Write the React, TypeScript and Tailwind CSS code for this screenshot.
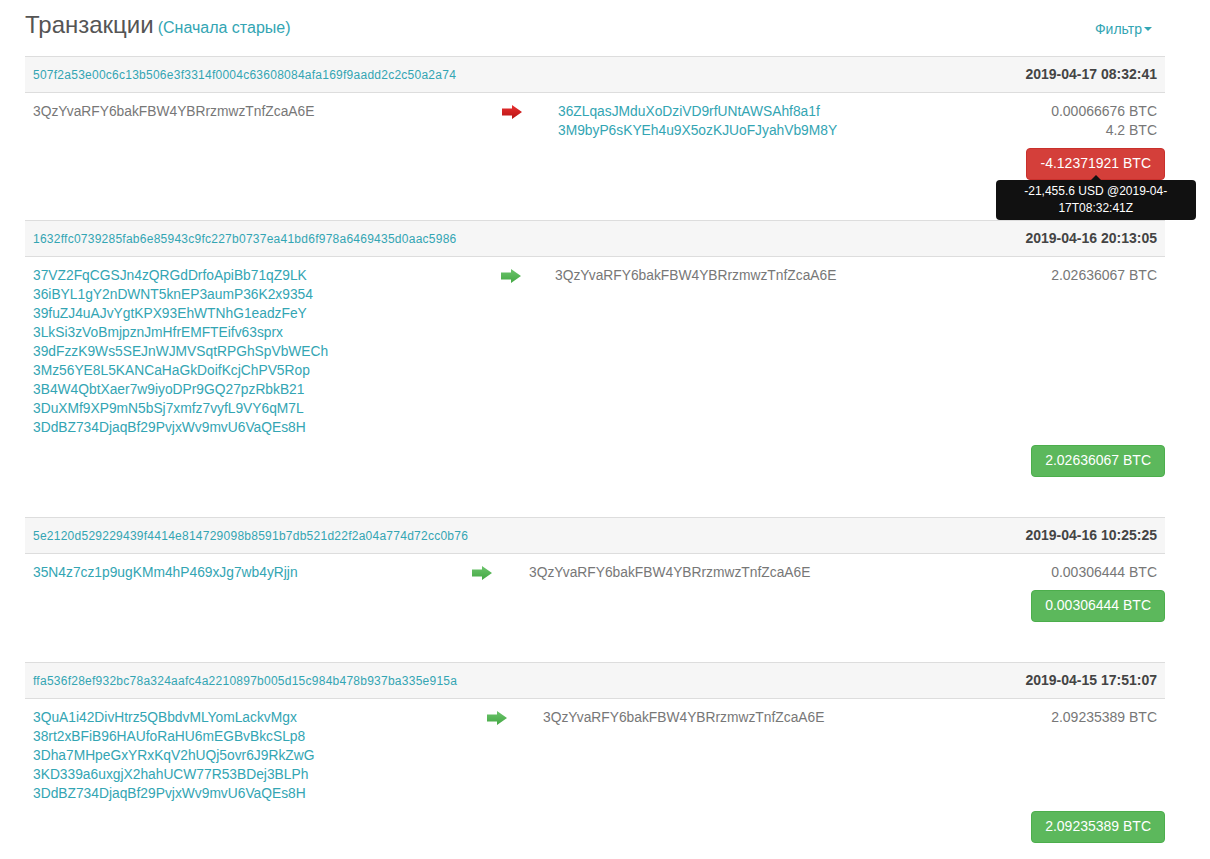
import React from "react";

type Tx = {
  hash: string;
  date: string;
  from: string[];
  to: string[];
  amounts: string[];
  total: string;
  out: boolean;
  cols: string;
  tooltip?: string[];
};

const SELF = "3QzYvaRFY6bakFBW4YBRrzmwzTnfZcaA6E";

const txs: Tx[] = [
  {
    hash: "507f2a53e00c6c13b506e3f3314f0004c63608084afa169f9aadd2c2c50a2a74",
    date: "2019-04-17 08:32:41",
    from: [SELF],
    to: ["36ZLqasJMduXoDziVD9rfUNtAWSAhf8a1f", "3M9byP6sKYEh4u9X5ozKJUoFJyahVb9M8Y"],
    amounts: ["0.00066676 BTC", "4.2 BTC"],
    total: "-4.12371921 BTC",
    out: true,
    cols: "grid grid-cols-[469px_56px_1fr_auto]",
    tooltip: ["-21,455.6 USD @2019-04-", "17T08:32:41Z"],
  },
  {
    hash: "1632ffc0739285fab6e85943c9fc227b0737ea41bd6f978a6469435d0aac5986",
    date: "2019-04-16 20:13:05",
    from: [
      "37VZ2FqCGSJn4zQRGdDrfoApiBb71qZ9LK",
      "36iBYL1gY2nDWNT5knEP3aumP36K2x9354",
      "39fuZJ4uAJvYgtKPX93EhWTNhG1eadzFeY",
      "3LkSi3zVoBmjpznJmHfrEMFTEifv63sprx",
      "39dFzzK9Ws5SEJnWJMVSqtRPGhSpVbWECh",
      "3Mz56YE8L5KANCaHaGkDoifKcjChPV5Rop",
      "3B4W4QbtXaer7w9iyoDPr9GQ27pzRbkB21",
      "3DuXMf9XP9mN5bSj7xmfz7vyfL9VY6qM7L",
      "3DdBZ734DjaqBf29PvjxWv9mvU6VaQEs8H",
    ],
    to: [SELF],
    amounts: ["2.02636067 BTC"],
    total: "2.02636067 BTC",
    out: false,
    cols: "grid grid-cols-[468px_54px_1fr_auto]",
  },
  {
    hash: "5e2120d529229439f4414e814729098b8591b7db521d22f2a04a774d72cc0b76",
    date: "2019-04-16 10:25:25",
    from: ["35N4z7cz1p9ugKMm4hP469xJg7wb4yRjjn"],
    to: [SELF],
    amounts: ["0.00306444 BTC"],
    total: "0.00306444 BTC",
    out: false,
    cols: "grid grid-cols-[439px_57px_1fr_auto]",
  },
  {
    hash: "ffa536f28ef932bc78a324aafc4a2210897b005d15c984b478b937ba335e915a",
    date: "2019-04-15 17:51:07",
    from: [
      "3QuA1i42DivHtrz5QBbdvMLYomLackvMgx",
      "38rt2xBFiB96HAUfoRaHU6mEGBvBkcSLp8",
      "3Dha7MHpeGxYRxKqV2hUQj5ovr6J9RkZwG",
      "3KD339a6uxgjX2hahUCW77R53BDej3BLPh",
      "3DdBZ734DjaqBf29PvjxWv9mvU6VaQEs8H",
    ],
    to: [SELF],
    amounts: ["2.09235389 BTC"],
    total: "2.09235389 BTC",
    out: false,
    cols: "grid grid-cols-[454px_56px_1fr_auto]",
  },
];

function Arrow({ red }: { red: boolean }) {
  const id = red ? "gr" : "gg";
  return (
    <svg width="20" height="14" viewBox="0 0 20 14" className="block">
      <defs>
        <linearGradient id={id} x1="0" y1="0" x2="0" y2="1">
          <stop offset="0" stopColor={red ? "#e83030" : "#6cc46c"} />
          <stop offset="1" stopColor={red ? "#b81414" : "#44a844"} />
        </linearGradient>
      </defs>
      <path d="M0 3.5 H10 V0 L20 7 L10 14 V10.5 H0 Z" fill={`url(#${id})`} />
    </svg>
  );
}

function Addr({ a }: { a: string }) {
  if (a === SELF) {
    return <div className="text-[#777] text-[13.8px]">{a}</div>;
  }
  return <div className="text-[#33a5b3] text-[13.8px]">{a}</div>;
}

function Transaction({ tx }: { tx: Tx }) {
  return (
    <div className="mb-[40.5px]">
      <div className="h-[37px] border-y border-[#dddddd] bg-[#f6f6f6] flex items-center justify-between px-2">
        <span className="text-[12px] text-[#33a5b3] tracking-[0.25px]">{tx.hash}</span>
        <span className="text-[14px] font-bold text-[#444]">{tx.date}</span>
      </div>
      <div className={`${tx.cols} pt-[9px] text-[14px] leading-[19px]`}>
        <div className="px-2">
          {tx.from.map((a, i) => (
            <Addr key={i} a={a} />
          ))}
        </div>
        <div className="pl-2 pt-[3px]">
          <Arrow red={tx.out} />
        </div>
        <div className="px-2">
          {tx.to.map((a, i) => (
            <Addr key={i} a={a} />
          ))}
        </div>
        <div className="px-2 text-right text-[#777]">
          {tx.amounts.map((a, i) => (
            <div key={i}>{a}</div>
          ))}
        </div>
      </div>
      <div className="flex justify-end mt-[7.5px]">
        <div className="relative">
          <div
            className={`h-[32px] px-[13px] flex items-center rounded-[4px] text-white text-[14px] ${
              tx.out ? "bg-[#d43f3a] border border-[#c9302c]" : "bg-[#5cb85c] border border-[#4cae4c]"
            }`}
          >
            {tx.total}
          </div>
          {tx.tooltip && (
            <div className="absolute top-full left-1/2 -translate-x-1/2 w-[200px] z-10">
              <div className="absolute -top-[5px] left-1/2 -translate-x-1/2 w-0 h-0 border-l-[5px] border-r-[5px] border-b-[5px] border-l-transparent border-r-transparent border-b-[#111]" />
              <div className="bg-[#111] rounded-[4px] px-2 py-[3px] text-white text-[12px] leading-[17px] text-center">
                {tx.tooltip.map((t, i) => (
                  <div key={i}>{t}</div>
                ))}
              </div>
            </div>
          )}
        </div>
      </div>
    </div>
  );
}

export default function App() {
  return (
    <div className="bg-white min-h-[859px] font-['Liberation_Sans',Arial,sans-serif]">
      <div className="ml-[25px] w-[1140px]">
        <div className="h-[56px] flex justify-between items-start">
          <div className="pt-[12px] flex items-baseline">
            <span className="text-[24px] leading-[26px] text-[#555]">Транзакции</span>
            <span className="ml-[4px] text-[16px] text-[#33a5b3]">(Сначала старые)</span>
          </div>
          <div className="mt-[19px] mr-[13px] text-[14px] leading-[20px] text-[#33a5b3] flex items-center">
            Фильтр
            <span className="ml-[2px] w-0 h-0 border-l-[4px] border-r-[4px] border-t-[4px] border-l-transparent border-r-transparent border-t-[#33a5b3]" />
          </div>
        </div>
        {txs.map((tx, i) => (
          <Transaction key={i} tx={tx} />
        ))}
      </div>
    </div>
  );
}
